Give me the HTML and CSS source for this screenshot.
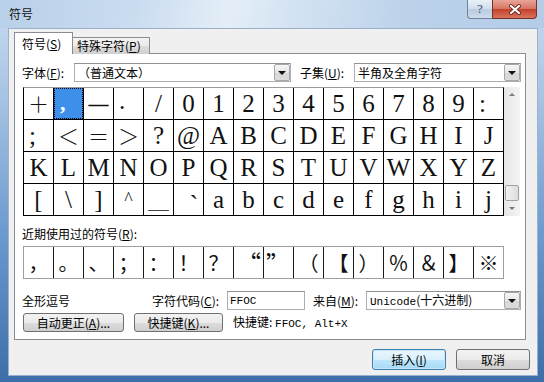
FILE: index.html
```html
<!DOCTYPE html>
<html lang="zh-CN">
    <head>
        <meta charset="UTF-8">
        <title>符号</title>
        <link rel="stylesheet" href="styles.css">
    </head>
    <body>
        <div class="window">
            <div class="titlebar">
                <span class="title">符号</span>
                <div class="caption">
                    <div class="help">?</div>
                    <div class="close">
                        <svg width="14" height="11" viewBox="0 0 14 11">
                            <path d="M3 2 L11 9 M11 2 L3 9" stroke="#6b2418" stroke-width="3.8" stroke-linecap="round"/>
                            <path d="M3 2 L11 9 M11 2 L3 9" stroke="#ffffff" stroke-width="2.2" stroke-linecap="round"/>
                        </svg>
                    </div>
                </div>
            </div>

            <div class="client">
                <div class="tabs">
                    <div class="tab active">符号(<u>S</u>)</div>
                    <div class="tab">特殊字符(<u>P</u>)</div>
                </div>

                <div class="panel">
                    <div class="font-row">
                        <span class="lbl lbl-font">字体(<u>F</u>):</span>
                        <div class="combo combo-font">
                            <span class="combo-text">（普通文本）</span>
                            <div class="drop"><span class="arrow"></span></div>
                        </div>
                        <span class="lbl lbl-subset">子集(<u>U</u>):</span>
                        <div class="combo combo-subset">
                            <span class="combo-text">半角及全角字符</span>
                            <div class="drop"><span class="arrow"></span></div>
                        </div>
                    </div>

                    <div class="grid-wrap">
                        <div class="grid">
                            <div class="c wide">＋</div>
                            <div class="c sel"><span>,</span></div>
                            <div class="c dash">—</div>
                            <div class="c lft low">.</div>
                            <div class="c">/</div>
                            <div class="c">0</div>
                            <div class="c">1</div>
                            <div class="c">2</div>
                            <div class="c">3</div>
                            <div class="c">4</div>
                            <div class="c">5</div>
                            <div class="c">6</div>
                            <div class="c">7</div>
                            <div class="c">8</div>
                            <div class="c">9</div>
                            <div class="c lft">:</div>

                            <div class="c lft">;</div>
                            <div class="c wide">＜</div>
                            <div class="c wide">＝</div>
                            <div class="c wide">＞</div>
                            <div class="c">?</div>
                            <div class="c">@</div>
                            <div class="c">A</div>
                            <div class="c">B</div>
                            <div class="c">C</div>
                            <div class="c">D</div>
                            <div class="c">E</div>
                            <div class="c">F</div>
                            <div class="c">G</div>
                            <div class="c">H</div>
                            <div class="c">I</div>
                            <div class="c">J</div>

                            <div class="c">K</div>
                            <div class="c">L</div>
                            <div class="c">M</div>
                            <div class="c">N</div>
                            <div class="c">O</div>
                            <div class="c">P</div>
                            <div class="c">Q</div>
                            <div class="c">R</div>
                            <div class="c">S</div>
                            <div class="c">T</div>
                            <div class="c">U</div>
                            <div class="c">V</div>
                            <div class="c">W</div>
                            <div class="c">X</div>
                            <div class="c">Y</div>
                            <div class="c">Z</div>

                            <div class="c">[</div>
                            <div class="c">\</div>
                            <div class="c">]</div>
                            <div class="c top">^</div>
                            <div class="c wide">＿</div>
                            <div class="c rgt">`</div>
                            <div class="c">a</div>
                            <div class="c">b</div>
                            <div class="c">c</div>
                            <div class="c">d</div>
                            <div class="c">e</div>
                            <div class="c">f</div>
                            <div class="c">g</div>
                            <div class="c">h</div>
                            <div class="c">i</div>
                            <div class="c">j</div>
                        </div>
                        <div class="vscroll">
                            <div class="sb-btn"><span class="sb-up"></span></div>
                            <div class="sb-track"></div>
                            <div class="sb-thumb"></div>
                            <div class="sb-btn"><span class="sb-down"></span></div>
                        </div>
                    </div>

                    <div class="recent-label">近期使用过的符号(<u>R</u>):</div>
                    <div class="recent">
                        <div class="r">，</div>
                        <div class="r">。</div>
                        <div class="r">、</div>
                        <div class="r">；</div>
                        <div class="r">：</div>
                        <div class="r">！</div>
                        <div class="r">？</div>
                        <div class="r r-rgt">“</div>
                        <div class="r r-lft">”</div>
                        <div class="r">（</div>
                        <div class="r">【</div>
                        <div class="r">）</div>
                        <div class="r">％</div>
                        <div class="r">＆</div>
                        <div class="r">】</div>
                        <div class="r">※</div>
                    </div>

                    <div class="info-row">
                        <span class="lbl lbl-name">全形逗号</span>
                        <span class="lbl lbl-code">字符代码(<u>C</u>):</span>
                        <div class="field"><span class="mono">FFOC</span></div>
                        <span class="lbl lbl-from">来自(<u>M</u>):</span>
                        <div class="combo combo-from">
                            <span class="combo-text"><span class="mono">Unicode</span>(十六进制)</span>
                            <div class="drop"><span class="arrow"></span></div>
                        </div>
                    </div>

                    <div class="btn-row">
                        <div class="btn btn-auto">自动更正(<u>A</u>)...</div>
                        <div class="btn btn-key">快捷键(<u>K</u>)...</div>
                        <span class="shortcut">快捷键: <span class="mono">FFOC, Alt+X</span></span>
                    </div>
                </div>

                <div class="footer">
                    <div class="btn btn-main default">插入(<u>I</u>)</div>
                    <div class="btn btn-main">取消</div>
                </div>
            </div>
        </div>
    </body>
</html>
```

FILE: styles.css
```css
body {
    margin: 0;
    width: 544px;
    height: 382px;
    overflow: hidden;
    font-family: "Noto Sans CJK SC", sans-serif;
    font-size: 12px;
    line-height: 14px;
    color: #000;
}

u {
    text-decoration: underline;
    text-underline-offset: 1px;
}

.mono {
    font-family: "Liberation Mono", monospace;
    font-size: 11px;
}

.window {
    width: 544px;
    height: 382px;
    display: flex;
    flex-direction: column;
    background: linear-gradient(to bottom, #c7dbef 0%, #a8c4e3 25%, #6e9bcf 60%, #3d6ea9 100%);
}

/* title bar */
.titlebar {
    height: 28px;
    flex: none;
    display: flex;
    align-items: flex-start;
    background: linear-gradient(100deg, #b9d0e9 0%, #cadcf0 25%, #e4eef8 42%, #d2e2f2 55%, #bcd2ea 75%, #b4cce7 100%);
}

.title {
    padding: 7px 0 0 9px;
    font-size: 12px;
    color: #111;
}

.caption {
    margin-left: auto;
    margin-right: 7px;
    display: flex;
}

.help {
    box-sizing: border-box;
    width: 25px;
    height: 19px;
    border: 1px solid #6f83a0;
    border-top: none;
    border-right: none;
    border-radius: 0 0 0 4px;
    background: linear-gradient(#eaf1f8, #d0deec 50%, #b8cbe0 51%, #cfdcea);
    color: #3c4c60;
    font-family: "Liberation Serif", serif;
    font-size: 13px;
    line-height: 18px;
    text-align: center;
}

.close {
    box-sizing: border-box;
    width: 45px;
    height: 19px;
    border: 1px solid #70342c;
    border-top: none;
    border-radius: 0 0 4px 0;
    background: linear-gradient(#e9a699, #d77262 50%, #c2412c 51%, #d9735c);
    display: flex;
    align-items: center;
    justify-content: center;
}

/* client area */
.client {
    box-sizing: border-box;
    margin-left: 8px;
    width: 530px;
    height: 348px;
    border: 1px solid #9bb1cb;
    background: #f0f0f0;
    padding: 4px 0 0 5px;
}

.tabs {
    display: flex;
    align-items: flex-end;
    height: 21px;
    margin-bottom: -1px;
}

.tab {
    box-sizing: border-box;
    border: 1px solid #898c95;
    border-bottom: none;
    white-space: nowrap;
}

.tab.active {
    position: relative;
    z-index: 1;
    width: 59px;
    height: 22px;
    padding: 4px 0 0 7px;
    background: #fff;
}

.tab:not(.active) {
    width: 77px;
    height: 17px;
    padding: 1px 0 0 4px;
    border-left: none;
    background: linear-gradient(#f3f3f3, #ebebeb 50%, #dddddd 51%, #cfcfcf);
}

.panel {
    box-sizing: border-box;
    width: 512px;
    height: 287px;
    border: 1px solid #898c95;
    background: #fff;
    padding: 9px 3px 0 7px;
}

.lbl {
    flex: none;
    white-space: nowrap;
}

/* font row */
.font-row {
    display: flex;
    align-items: center;
    height: 19px;
}

.lbl-font { width: 52px; }
.lbl-subset { width: 54px; margin-left: 9px; }

.combo {
    box-sizing: border-box;
    flex: none;
    height: 19px;
    border: 1px solid #abadb3;
    border-top-color: #8e9298;
    background: #fff;
    display: flex;
    align-items: center;
}

.combo-font { width: 217px; }
.combo-subset { width: 167px; }
.combo-from { width: 155px; }

.combo-text {
    flex: 1;
    padding-left: 3px;
    white-space: nowrap;
}

.drop {
    box-sizing: border-box;
    width: 16px;
    height: 17px;
    border: 1px solid #a8a8a8;
    border-radius: 2px;
    background: linear-gradient(#f6f6f6, #e6e6e6 50%, #d6d6d6 51%, #dcdcdc);
    display: flex;
    align-items: center;
    justify-content: center;
}

.arrow {
    width: 0;
    height: 0;
    border-left: 4px solid transparent;
    border-right: 4px solid transparent;
    border-top: 4px solid #111;
    margin-top: 1px;
}

/* symbol grid */
.grid-wrap {
    display: flex;
    margin: 5px 0 0 1px;
}

.grid {
    display: grid;
    grid-template-columns: repeat(16, 29px);
    grid-auto-rows: 31px;
    gap: 1px;
    background: #000;
    border: 1px solid #000;
    border-top-color: #9a9a9a;
}

.c {
    background: #fff;
    display: flex;
    align-items: center;
    justify-content: center;
    font-family: "Liberation Serif", serif;
    font-size: 25px;
    line-height: 1;
    color: #111;
}

.c.wide {
    font-family: "Noto Sans CJK SC", sans-serif;
    font-size: 21px;
    font-weight: 300;
}

.c.dash {
    font-weight: bold;
    font-size: 20px;
}

.c.lft {
    justify-content: flex-start;
    padding-left: 5px;
}

.c.low {
    align-items: flex-end;
    padding-bottom: 6px;
}

.c.top {
    align-items: flex-start;
    padding-top: 6px;
    font-size: 18px;
}

.c.rgt {
    justify-content: flex-end;
    padding-right: 5px;
    align-items: flex-start;
    padding-top: 8px;
}

.c.sel {
    background: #3d8fe9;
    outline: 1px dotted #000;
    outline-offset: -1px;
    justify-content: flex-start;
    align-items: flex-end;
    padding: 0 0 5px 6px;
    color: #fff;
    font-weight: bold;
    font-size: 22px;
}

.vscroll {
    width: 16px;
    display: flex;
    flex-direction: column;
    background: linear-gradient(to right, #e6e6e6, #f4f4f4);
}

.sb-btn {
    height: 15px;
    display: flex;
    align-items: center;
    justify-content: center;
}

.sb-track {
    flex: 1;
}

.sb-up, .sb-down {
    width: 0;
    height: 0;
    border-left: 3px solid transparent;
    border-right: 3px solid transparent;
}

.sb-up { border-bottom: 3px solid #7a7a7a; }
.sb-down { border-top: 3px solid #7a7a7a; }

.sb-thumb {
    box-sizing: border-box;
    height: 16px;
    margin: 0 1px;
    border: 1px solid #a2a2a2;
    border-radius: 2px;
    background: linear-gradient(to right, #f2f2f2, #dcdcdc);
}

/* recently used */
.recent-label {
    margin-top: 11px;
    height: 14px;
    white-space: nowrap;
}

.recent {
    display: grid;
    grid-template-columns: repeat(16, 29px);
    width: max-content;
    height: 33px;
    box-sizing: border-box;
    gap: 1px;
    margin: 5px 0 0 1px;
    background: #1a1a1a;
    border: 1px solid #9e9e9e;
}

.r {
    background: #fff;
    display: flex;
    align-items: center;
    justify-content: center;
    font-family: "Noto Sans CJK SC", sans-serif;
    font-size: 20px;
    line-height: 1;
    color: #111;
}

.r.r-rgt { justify-content: flex-end; padding-right: 2px; font-size: 24px; }
.r.r-lft { justify-content: flex-start; padding-left: 2px; font-size: 24px; }

/* info */
.info-row {
    display: flex;
    align-items: center;
    height: 19px;
    margin-top: 12px;
}

.lbl-name { width: 130px; }
.lbl-code { width: 75px; }
.lbl-from { width: 53px; margin-left: 8px; }

.field {
    box-sizing: border-box;
    flex: none;
    width: 78px;
    height: 19px;
    border: 1px solid #abadb3;
    border-top-color: #8e9298;
    padding-left: 2px;
    display: flex;
    align-items: center;
}

.btn-row {
    display: flex;
    align-items: center;
    height: 19px;
    margin-top: 3px;
}

.btn {
    box-sizing: border-box;
    flex: none;
    border: 1px solid #707070;
    border-radius: 3px;
    background: linear-gradient(#f2f2f2, #ebebeb 50%, #dddddd 51%, #cfcfcf);
    display: flex;
    align-items: center;
    justify-content: center;
    white-space: nowrap;
}

.btn-auto {
    width: 101px;
    height: 19px;
    margin-left: 1px;
}

.btn-key {
    width: 89px;
    height: 19px;
    margin-left: 10px;
}

.shortcut {
    margin-left: 10px;
    white-space: nowrap;
}

/* dialog buttons */
.footer {
    display: flex;
    justify-content: flex-end;
    gap: 10px;
    padding: 9px 7px 0 0;
}

.btn-main {
    width: 74px;
    height: 21px;
}

.btn-main.default {
    border-color: #3c7fb1;
    background: linear-gradient(#eaf6fd, #d9f0fc 50%, #bee6fd 51%, #a7d9f5);
    box-shadow: inset 0 0 0 1px #c8e6f7;
}
```
